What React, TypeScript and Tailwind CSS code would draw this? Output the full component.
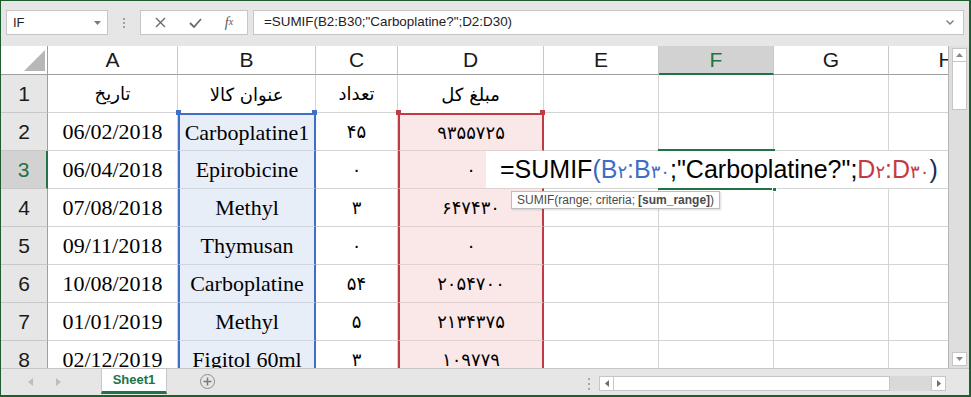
import React from "react";

type RowData = { n: number; a: string; b: string; c: string; d: string };

const rows: RowData[] = [
  { n: 1, a: "تاریخ", b: "عنوان کالا", c: "تعداد", d: "مبلغ کل" },
  { n: 2, a: "06/02/2018", b: "Carboplatine1", c: "۴۵", d: "۹۳۵۵۷۲۵" },
  { n: 3, a: "06/04/2018", b: "Epirobicine", c: "۰", d: "۰" },
  { n: 4, a: "07/08/2018", b: "Methyl", c: "۳", d: "۶۴۷۴۳۰" },
  { n: 5, a: "09/11/2018", b: "Thymusan", c: "۰", d: "۰" },
  { n: 6, a: "10/08/2018", b: "Carboplatine", c: "۵۴", d: "۲۰۵۴۷۰۰" },
  { n: 7, a: "01/01/2019", b: "Methyl", c: "۵", d: "۲۱۳۴۳۷۵" },
  { n: 8, a: "02/12/2019", b: "Figitol 60ml", c: "۳", d: "۱۰۹۷۷۹" },
];

function TopBar() {
  return (
    <div className="flex h-[45px] shrink-0 items-start pt-[9px] font-['Liberation_Sans',sans-serif]">
      {/* name box */}
      <div className="ml-[5px] flex h-[25px] w-[102px] items-center justify-between border border-[#c6c6c6] bg-white pl-[6px] pr-[6px] text-[13px] text-[#222]">
        <span>IF</span>
        <svg width="7" height="4" viewBox="0 0 7 4">
          <path d="M0 0 L7 0 L3.5 4 Z" fill="#7a7a7a" />
        </svg>
      </div>
      <div className="flex h-[25px] w-[32px] flex-col items-center justify-center gap-[2px]">
        <span className="h-[2px] w-[2px] bg-[#a0a0a0]" />
        <span className="h-[2px] w-[2px] bg-[#a0a0a0]" />
        <span className="h-[2px] w-[2px] bg-[#a0a0a0]" />
      </div>
      {/* cancel / enter / fx */}
      <div className="flex h-[25px] w-[108px] items-center border border-[#c6c6c6] bg-white">
        <div className="flex w-[38px] justify-center">
          <svg width="11" height="11" viewBox="0 0 11 11">
            <path d="M1 1 L10 10 M10 1 L1 10" stroke="#6b6b6b" strokeWidth="1.4" />
          </svg>
        </div>
        <div className="flex w-[32px] justify-center">
          <svg width="13" height="10" viewBox="0 0 13 10">
            <path d="M1 5 L5 9 L12 1" stroke="#6b6b6b" strokeWidth="1.8" fill="none" />
          </svg>
        </div>
        <div className="flex w-[36px] justify-center font-['Liberation_Serif',serif] text-[14px] italic text-[#555]">
          f<span className="text-[10px] leading-[20px]">x</span>
        </div>
      </div>
      {/* formula input */}
      <div className="ml-[5px] flex h-[25px] w-[711px] items-center justify-between border border-[#c6c6c6] bg-white pl-[10px] pr-[9px] text-[13.4px] text-[#222]">
        <span>=SUMIF(B2:B30;"Carboplatine?";D2:D30)</span>
        <svg width="8" height="5" viewBox="0 0 8 5">
          <path d="M0.5 0.5 L4 4 L7.5 0.5" stroke="#777" strokeWidth="1.3" fill="none" />
        </svg>
      </div>
    </div>
  );
}

function ColumnHeaders() {
  const base =
    "flex shrink-0 items-center justify-center border-r border-r-[#c8c8c8] border-b border-b-[#9f9f9f] text-[21px] text-[#1a1a1a]";
  return (
    <div className="flex h-[29px] shrink-0 font-['Liberation_Sans',sans-serif]">
      <div className="relative w-[47px] shrink-0 border-r border-b border-[#9f9f9f]">
        <svg className="absolute right-[2px] bottom-[3px]" width="21" height="21" viewBox="0 0 21 21">
          <path d="M21 0 L21 21 L0 21 Z" fill="#b7b7b7" />
        </svg>
      </div>
      <div className={`${base} w-[130px]`}>A</div>
      <div className={`${base} w-[138px]`}>B</div>
      <div className={`${base} w-[82px]`}>C</div>
      <div className={`${base} w-[146px]`}>D</div>
      <div className={`${base} w-[115px]`}>E</div>
      <div className="flex w-[115px] shrink-0 items-center justify-center border-r border-r-[#c8c8c8] border-b-2 border-b-[#217346] bg-[#d2d2d2] text-[21px] text-[#217346]">
        F
      </div>
      <div className={`${base} w-[115px]`}>G</div>
      <div className={`${base} w-[115px]`}>H</div>
    </div>
  );
}

function GridRow({ r }: { r: RowData }) {
  const head = r.n === 1;
  const active = r.n === 3;
  const cell = "flex h-[38px] shrink-0 items-center justify-center border-r border-b border-[#d4d4d4]";
  const fa = "font-['DejaVu_Sans',sans-serif]";
  return (
    <div className="flex h-[38px] shrink-0">
      <div
        className={
          active
            ? "flex h-[38px] w-[47px] shrink-0 items-center justify-center border-r-2 border-r-[#217346] border-b border-b-[#c8c8c8] bg-[#d2d2d2] font-['Liberation_Sans',sans-serif] text-[21px] text-[#217346]"
            : "flex h-[38px] w-[47px] shrink-0 items-center justify-center border-r border-r-[#9f9f9f] border-b border-b-[#c8c8c8] bg-[#e6e6e6] font-['Liberation_Sans',sans-serif] text-[21px] text-[#1a1a1a]"
        }
      >
        {r.n}
      </div>
      <div className={`${cell} w-[130px] ${head ? `${fa} text-[18px]` : "font-['Liberation_Serif',serif] text-[22px]"}`} dir={head ? "rtl" : undefined}>
        {r.a}
      </div>
      {head ? (
        <div className={`flex h-[38px] w-[138px] shrink-0 items-center justify-center border-r border-[#d4d4d4] ${fa} text-[18px]`} dir="rtl">
          {r.b}
        </div>
      ) : (
        <div
          className={`flex h-[38px] w-[138px] shrink-0 items-center justify-center border-x-2 border-x-[#3e6ec5] border-b border-b-[#d0d6e0] bg-[#e8eef8] font-['Liberation_Serif',serif] text-[22px] ${
            r.n === 2 ? "border-t-2 border-t-[#3e6ec5]" : ""
          }`}
        >
          {r.b}
        </div>
      )}
      <div className={`${cell} w-[82px] ${fa} text-[18px]`} dir={head ? "rtl" : undefined}>
        {r.c}
      </div>
      {head ? (
        <div className={`flex h-[38px] w-[146px] shrink-0 items-center justify-center border-r border-[#d4d4d4] ${fa} text-[18px]`} dir="rtl">
          {r.d}
        </div>
      ) : (
        <div
          className={`flex h-[38px] w-[146px] shrink-0 items-center justify-center border-x-2 border-x-[#c23b44] border-b border-b-[#e0d2d3] bg-[#fae8e9] ${fa} text-[18px] ${
            r.n === 2 ? "border-t-2 border-t-[#c23b44]" : ""
          }`}
        >
          {r.d}
        </div>
      )}
      <div className={`${cell} w-[115px]`} />
      <div className={`${cell} w-[115px]`} />
      <div className={`${cell} w-[115px]`} />
      <div className={`${cell} w-[115px]`} />
    </div>
  );
}

function Handle({ className }: { className: string }) {
  return <div className={`absolute h-[5px] w-[5px] ${className}`} />;
}

function Grid() {
  return (
    <div className="relative h-[322px] w-[947px] shrink-0 overflow-hidden bg-white">
      <ColumnHeaders />
      {rows.map((r) => (
        <GridRow key={r.n} r={r} />
      ))}

      {/* range handles */}
      <Handle className="left-[175px] top-[64px] bg-[#3e6ec5]" />
      <Handle className="left-[311px] top-[64px] bg-[#3e6ec5]" />
      <Handle className="left-[395px] top-[64px] bg-[#c23b44]" />
      <Handle className="left-[539px] top-[64px] bg-[#c23b44]" />

      {/* in-cell editor */}
      <div className="absolute left-[485px] top-[105px] flex h-[37px] w-[462px] items-center bg-white pl-[14px] font-['Liberation_Sans','DejaVu_Sans',sans-serif] text-[25px] whitespace-nowrap text-black">
        <span>=SUMIF</span>
        <span className="text-[#3a63b5]">(</span>
        <span className="text-[#3e6ec5]">
          B<span className="font-['DejaVu_Sans',sans-serif] text-[18px]">۲</span>:B
          <span className="font-['DejaVu_Sans',sans-serif] text-[18px]">۳۰</span>
        </span>
        <span>;"Carboplatine?";</span>
        <span className="text-[#c23b44]">
          D<span className="font-['DejaVu_Sans',sans-serif] text-[18px]">۲</span>:D
          <span className="font-['DejaVu_Sans',sans-serif] text-[18px]">۳۰</span>
        </span>
        <span className="text-[#1c2a55]">)</span>
      </div>

      {/* active cell border F3 */}
      <div className="absolute left-[657px] top-[103px] h-[2px] w-[117px] bg-[#217346]" />
      <div className="absolute left-[657px] top-[142px] h-[2px] w-[114px] bg-[#217346]" />
      <div className="absolute left-[771px] top-[141px] h-[5px] w-[5px] border border-white bg-[#217346]" />

      {/* tooltip */}
      <div className="absolute left-[510px] top-[145px] flex h-[18px] items-center border border-[#bdbdbd] bg-white px-[5px] font-['Liberation_Sans',sans-serif] text-[12px] whitespace-nowrap text-[#4a4a4a] shadow-[1px_1px_2px_rgba(0,0,0,0.15)]">
        SUMIF(range; criteria; <b className="ml-[3px]">[sum_range]</b>)
      </div>
    </div>
  );
}

function VScroll() {
  return (
    <div className="flex h-[322px] w-[21px] shrink-0 flex-col border-l border-[#b5b5b5] bg-[#dedede] pl-[3px] pt-[2px]">
      <div className="flex h-[14px] w-[15px] items-center justify-center border border-[#c6c6c6] bg-white">
        <svg width="7" height="4" viewBox="0 0 7 4">
          <path d="M0 4 L7 4 L3.5 0 Z" fill="#8a8a8a" />
        </svg>
      </div>
      <div className="h-[48px] w-[15px] border border-t-0 border-[#c6c6c6] bg-white" />
      <div className="flex-1" />
      <div className="mb-[2px] flex h-[14px] w-[15px] items-center justify-center border border-[#c6c6c6] bg-white">
        <svg width="7" height="4" viewBox="0 0 7 4">
          <path d="M0 0 L7 0 L3.5 4 Z" fill="#8a8a8a" />
        </svg>
      </div>
    </div>
  );
}

function BottomBar() {
  return (
    <div className="flex h-[27px] shrink-0 items-start border-t border-[#c6c6c6] bg-[#e6e6e6] font-['Liberation_Sans',sans-serif]">
      <div className="flex w-[577px] shrink-0 items-start">
        <div className="flex h-[26px] w-[100px] items-center">
          <svg className="ml-[27px]" width="5" height="8" viewBox="0 0 5 8">
            <path d="M5 0 L5 8 L0 4 Z" fill="#bdbdbd" />
          </svg>
          <svg className="ml-[23px]" width="5" height="8" viewBox="0 0 5 8">
            <path d="M0 0 L0 8 L5 4 Z" fill="#bdbdbd" />
          </svg>
        </div>
        <div className="flex h-[25px] w-[66px] items-center justify-center border-x border-[#c6c6c6] border-b-[3px] border-b-[#217346] bg-white text-[13px] font-bold text-[#217346]">
          Sheet1
        </div>
        <div className="ml-[33px] mt-[5px] flex h-[15px] w-[15px] items-center justify-center rounded-full border-[1.5px] border-[#8c8c8c]">
          <svg width="9" height="9" viewBox="0 0 9 9">
            <path d="M4.5 0.5 V8.5 M0.5 4.5 H8.5" stroke="#7a7a7a" strokeWidth="1.5" />
          </svg>
        </div>
      </div>
      <div className="mt-[9px] flex h-[12px] w-[21px] shrink-0 flex-col items-center justify-between">
        <span className="h-[2px] w-[2px] bg-[#a8a8a8]" />
        <span className="h-[2px] w-[2px] bg-[#a8a8a8]" />
        <span className="h-[2px] w-[2px] bg-[#a8a8a8]" />
      </div>
      <div className="mt-[7px] flex h-[15px] shrink-0 items-center">
        <div className="flex h-[15px] w-[15px] items-center justify-center border border-[#c6c6c6] bg-white">
          <svg width="4" height="7" viewBox="0 0 4 7">
            <path d="M4 0 L4 7 L0 3.5 Z" fill="#6d6d6d" />
          </svg>
        </div>
        <div className="h-[15px] w-[276px] border border-l-0 border-[#c6c6c6] bg-white" />
        <div className="h-[15px] w-[41px] bg-[#d9d9d9]" />
        <div className="flex h-[15px] w-[15px] items-center justify-center border border-[#c6c6c6] bg-white">
          <svg width="4" height="7" viewBox="0 0 4 7">
            <path d="M0 0 L0 7 L4 3.5 Z" fill="#6d6d6d" />
          </svg>
        </div>
      </div>
    </div>
  );
}

export default function App() {
  return (
    <div className="flex h-[397px] w-[971px] flex-col overflow-hidden border-t border-l border-r-2 border-b-2 border-[#1d5e30] bg-[#e6e6e6]">
      <TopBar />
      <div className="flex shrink-0">
        <Grid />
        <VScroll />
      </div>
      <BottomBar />
    </div>
  );
}
